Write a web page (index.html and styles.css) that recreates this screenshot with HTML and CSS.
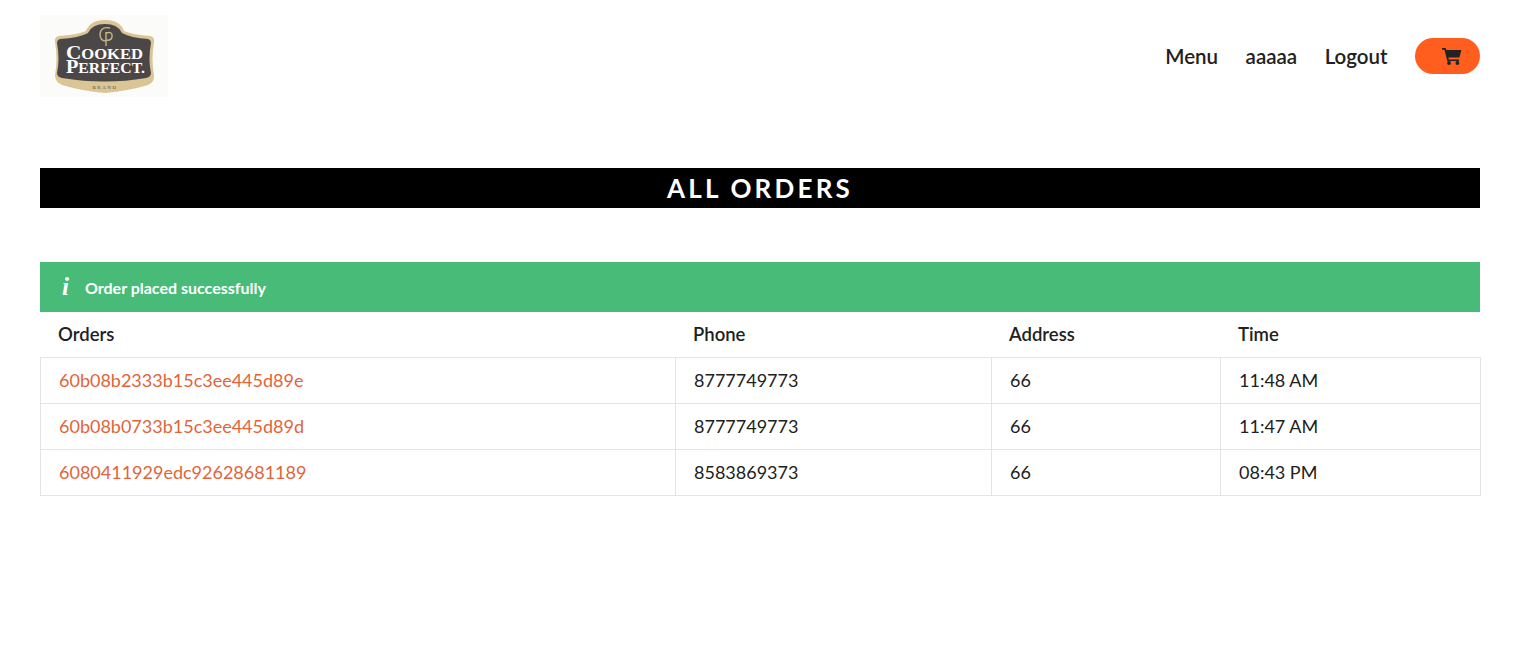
FILE: index.html
```html
<!DOCTYPE html>
<html>
<head>
  <meta charset="utf-8" />
  <title>All Orders</title>
  <link rel="stylesheet" href="styles.css">
</head>
<body>
  <header class="topbar">
    <a href="#" class="logo">
      <svg width="128" height="82" viewBox="0 0 128 82">
        <rect width="128" height="82" fill="#fbfbf9"/>
        <path d="M15 27 Q14 22 19 21 Q37 20 46 16 Q50 5 65 5 Q80 5 84 16 Q93 20 110 21 Q115 22 114 27 Q111 44 114 60 Q115 67 108 70 Q88 76 65 78 Q42 76 22 70 Q15 67 15 60 Q18 44 15 27 Z" fill="#d9c596"/>
        <path d="M17 28 Q17 25 20 24 Q39 23 48 18 Q52 9 65 9 Q78 9 82 18 Q91 23 108 24 Q111 25 111 28 Q108 44 111 58 Q111 62 106 63 Q65 70 22 63 Q17 62 17 58 Q20 44 17 28 Z" fill="#4b4746"/>
        <path d="M70 13 Q61 11 60 19 Q60 26 66 26 M66 17 L66 31 M66 18 Q73 16 72 22 Q71 26 66 25" fill="none" stroke="#c9b488" stroke-width="1.4"/>
        <text x="26" y="44" class="logo-line" textLength="77" lengthAdjust="spacingAndGlyphs"><tspan class="logo-cap">C</tspan>OOKED</text>
        <text x="26" y="58" class="logo-line" textLength="79" lengthAdjust="spacingAndGlyphs"><tspan class="logo-cap">P</tspan>ERFECT.</text>
        <text x="65" y="74" class="logo-brand">BRAND</text>
      </svg>
    </a>
    <nav class="nav">
      <a href="#">Menu</a>
      <a href="#">aaaaa</a>
      <a href="#">Logout</a>
      <a href="#" class="cart">
        <svg width="20" height="18" viewBox="0 0 20 18">
          <path d="M0 1 H3.6 L4.2 3 H19.4 L17.4 10.6 H6.4 L6.8 12.4 H17 V14 H5.3 L2.5 2.7 H0 Z" fill="#222"/>
          <circle cx="7" cy="16" r="1.9" fill="#222"/>
          <circle cx="15.4" cy="16" r="1.9" fill="#222"/>
        </svg>
      </a>
    </nav>
  </header>

  <main class="content">
    <h1 class="page-title">ALL ORDERS</h1>

    <div class="notice">
      <span class="notice-icon">i</span>
      <span>Order placed successfully</span>
    </div>

    <table class="orders">
      <thead>
        <tr>
          <th class="col-id">Orders</th>
          <th class="col-phone">Phone</th>
          <th class="col-address">Address</th>
          <th>Time</th>
        </tr>
      </thead>
      <tbody>
        <tr>
          <td><a href="#">60b08b2333b15c3ee445d89e</a></td>
          <td>8777749773</td>
          <td>66</td>
          <td>11:48 AM</td>
        </tr>
        <tr>
          <td><a href="#">60b08b0733b15c3ee445d89d</a></td>
          <td>8777749773</td>
          <td>66</td>
          <td>11:47 AM</td>
        </tr>
        <tr>
          <td><a href="#">6080411929edc92628681189</a></td>
          <td>8583869373</td>
          <td>66</td>
          <td>08:43 PM</td>
        </tr>
      </tbody>
    </table>
  </main>
</body>
</html>
```

FILE: styles.css
```css
* {
  box-sizing: border-box;
}
body {
  margin: 0;
  font-family: Lato, "Liberation Sans", sans-serif;
  font-size: 18px;
  color: #212121;
  background: #fff;
}
a {
  text-decoration: none;
  color: inherit;
}

.topbar {
  display: flex;
  justify-content: space-between;
  height: 112px;
  padding: 15px 44px 0 40px;
}
.logo {
  display: block;
  height: 82px;
}
.logo-line {
  font-family: "Liberation Serif", serif;
  font-size: 14px;
  font-weight: bold;
  fill: #fff;
}
.logo-cap {
  font-size: 18px;
}
.logo-brand {
  font-family: "Liberation Serif", serif;
  font-size: 5px;
  letter-spacing: 1.5px;
  fill: #5a4a2c;
  text-anchor: middle;
}
.nav {
  display: flex;
  align-items: center;
  gap: 27.5px;
  height: 82px;
  font-size: 20.5px;
  font-weight: 600;
}
.cart {
  display: flex;
  align-items: center;
  justify-content: flex-end;
  width: 65px;
  height: 36px;
  padding-right: 18px;
  border-radius: 18px;
  background: #ff5e1f;
}

.content {
  padding: 56px 44px 0 40px;
}
.page-title {
  height: 40px;
  margin: 0 0 54px;
  background: #000;
  color: #fff;
  font-size: 26px;
  font-weight: bold;
  line-height: 41px;
  letter-spacing: 3.2px;
  text-align: center;
}
.notice {
  display: flex;
  align-items: center;
  height: 50px;
  padding-left: 22px;
  background: #48bb78;
  color: #fff;
  font-size: 16px;
  font-weight: bold;
}
.notice-icon {
  width: 23px;
  font-family: "Liberation Serif", serif;
  font-size: 25px;
  font-style: italic;
  font-weight: bold;
}

.orders {
  width: 1441px;
  border-collapse: collapse;
  table-layout: fixed;
}
.orders th {
  height: 45px;
  padding: 0 17.5px;
  font-size: 18.5px;
  font-weight: 600;
  text-align: left;
}
.orders td {
  height: 46px;
  padding: 0 18px;
  border: 1px solid #e4e4e4;
}
.orders td a {
  color: #e2643a;
}
.col-id {
  width: 635px;
}
.col-phone {
  width: 316px;
}
.col-address {
  width: 229px;
}
```
